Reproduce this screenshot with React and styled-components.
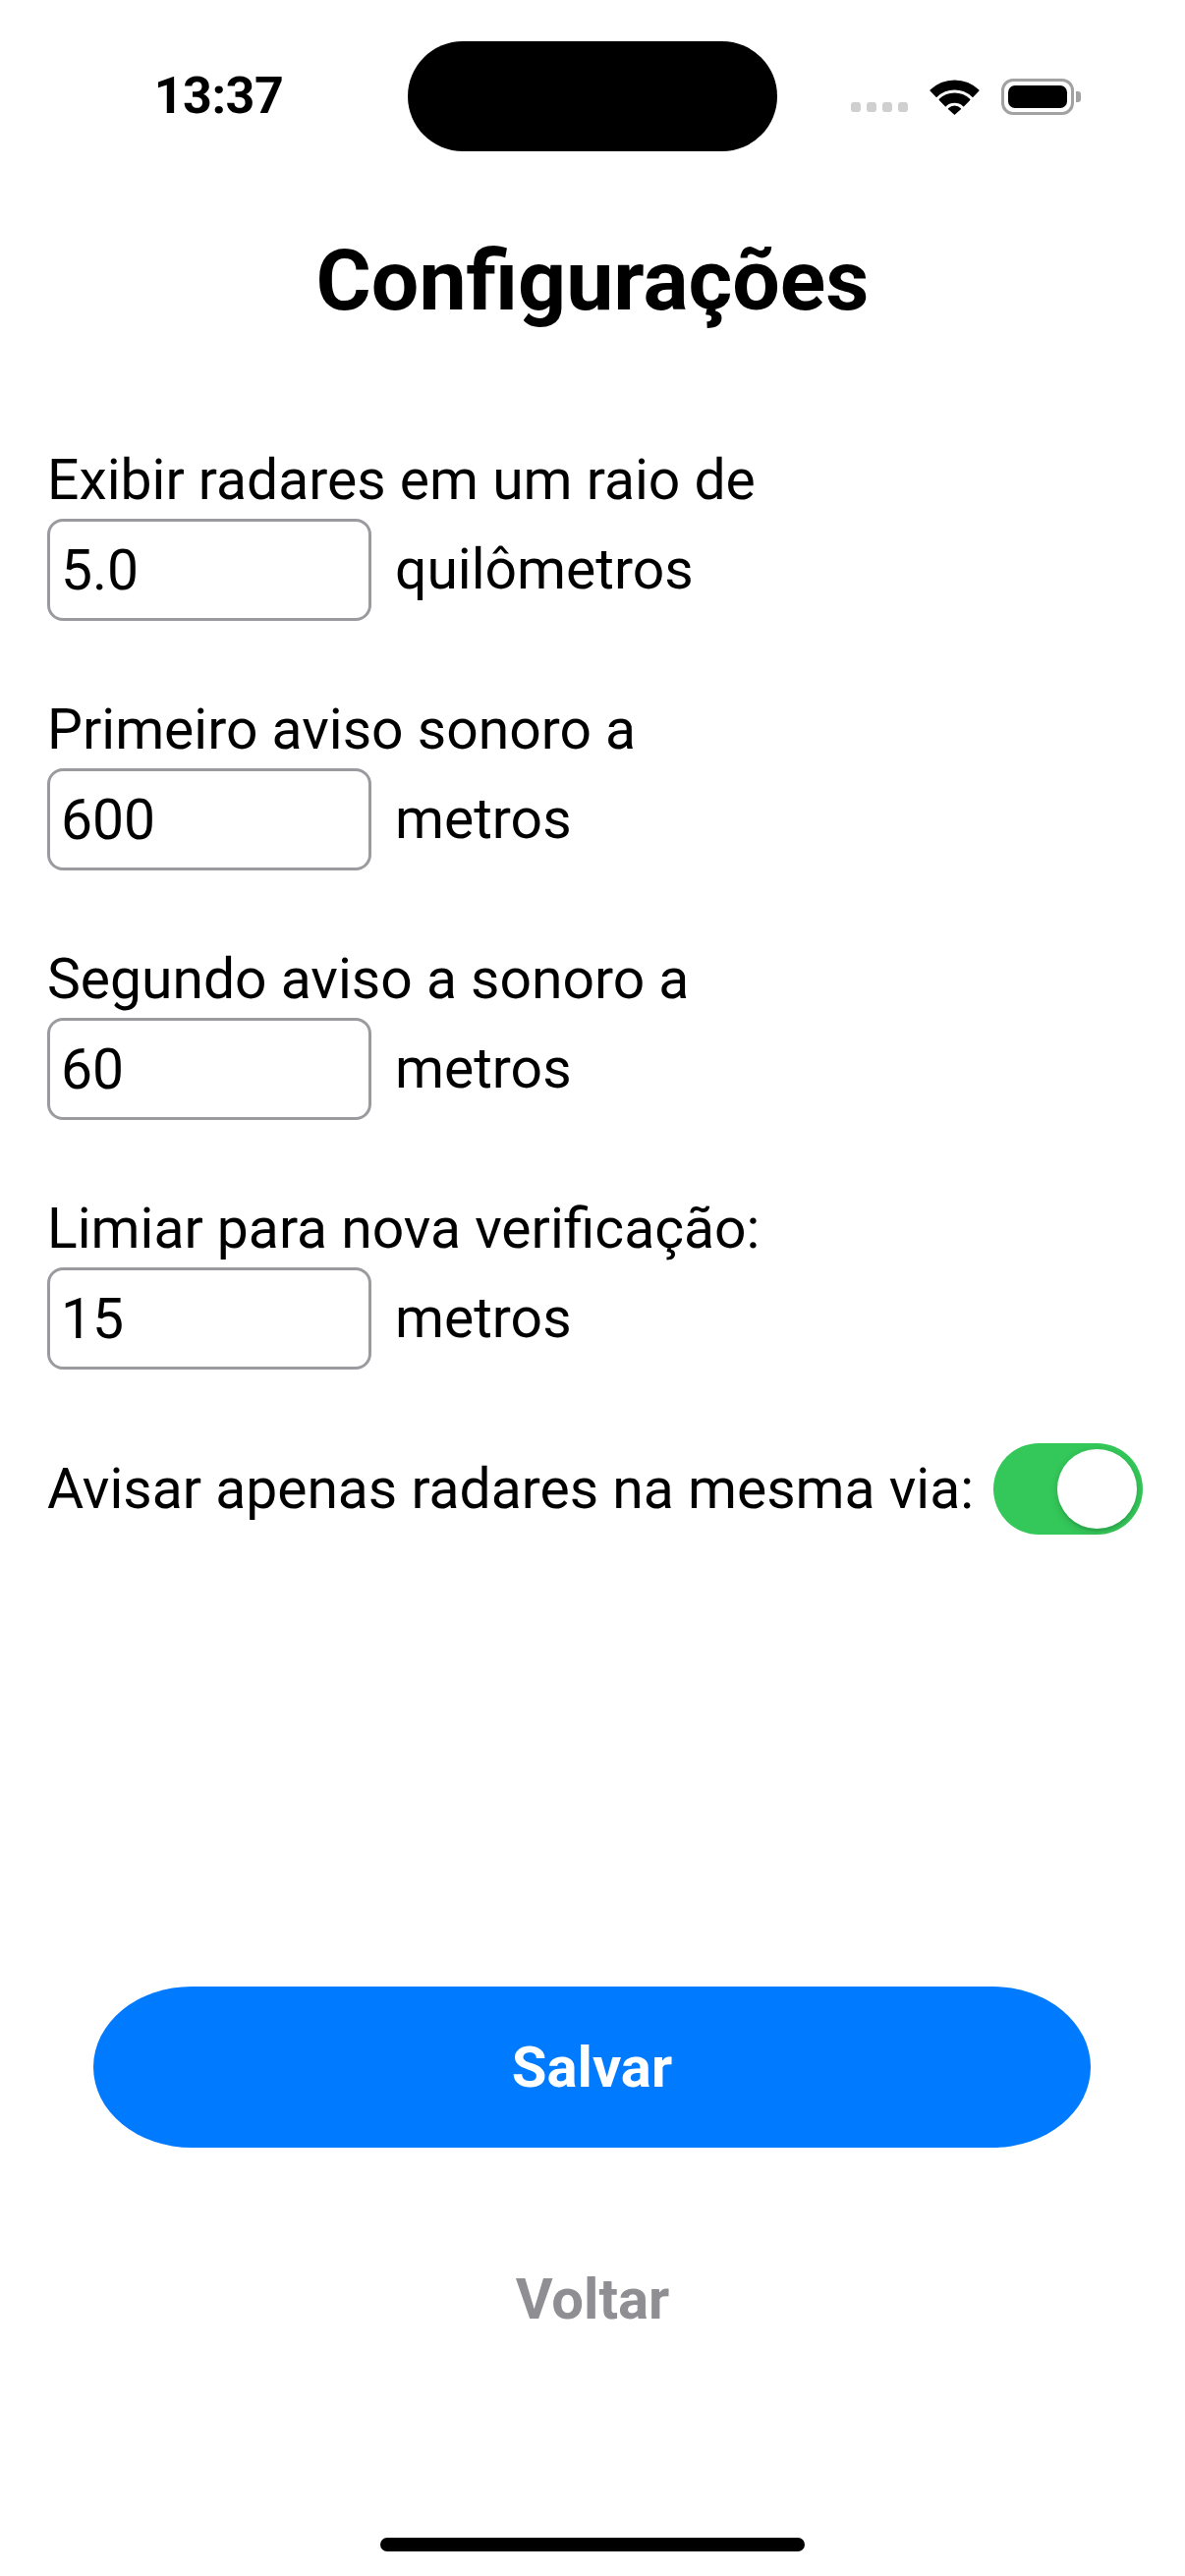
import React from "react";
import styled, { createGlobalStyle } from "styled-components";

const GlobalStyle = createGlobalStyle`
  html, body {
    margin: 0;
    padding: 0;
    background: #ffffff;
  }
  body {
    font-family: Roboto, "Liberation Sans", sans-serif;
    color: #000;
  }
  * {
    box-sizing: border-box;
  }
`;

const fields = [
  { label: "Exibir radares em um raio de", value: "5.0", unit: "quilômetros" },
  { label: "Primeiro aviso sonoro a", value: "600", unit: "metros" },
  { label: "Segundo aviso a sonoro a", value: "60", unit: "metros" },
  { label: "Limiar para nova verificação:", value: "15", unit: "metros" },
];

export default function App() {
  return (
    <>
      <GlobalStyle />
      <Screen>
        <StatusBar>
          <Clock>13:37</Clock>
          <Island />
          <StatusIcons>
            <Signal>
              <Dot />
              <Dot />
              <Dot />
              <Dot />
            </Signal>
            <WifiIcon />
            <Battery>
              <BatteryFill />
            </Battery>
            <BatteryCap />
          </StatusIcons>
        </StatusBar>

        <Title>Configurações</Title>

        <Form>
          {fields.map((f) => (
            <Group key={f.label}>
              <Label>{f.label}</Label>
              <InputRow>
                <NumberInput readOnly value={f.value} />
                <Unit>{f.unit}</Unit>
              </InputRow>
            </Group>
          ))}
          <ToggleRow>
            <Label>Avisar apenas radares na mesma via:</Label>
            <Switch $on>
              <Knob />
            </Switch>
          </ToggleRow>
        </Form>

        <Spacer />

        <Footer>
          <SaveButton>Salvar</SaveButton>
          <BackButton>Voltar</BackButton>
          <HomeIndicator />
        </Footer>
      </Screen>
    </>
  );
}

function WifiIcon() {
  return (
    <svg width="51" height="37" viewBox="0 0 51 37">
      <g fill="#000" stroke="#000" strokeWidth="1.5" strokeLinejoin="round">
        <path d="M1.1 12.1 A35 35 0 0 1 49.9 12.1 L43.9 18.3 A26.5 26.5 0 0 0 7.1 18.3 Z" />
        <path d="M10.3 21.4 A22 22 0 0 1 40.7 21.4 L34.6 27.6 A13.5 13.5 0 0 0 16.4 27.6 Z" />
        <path d="M19.6 30.7 A8.6 8.6 0 0 1 31.4 30.7 L25.5 36 Z" />
      </g>
    </svg>
  );
}

const Screen = styled.div`
  width: 1206px;
  height: 2622px;
  display: flex;
  flex-direction: column;
  overflow: hidden;
  background: #fff;
`;

const StatusBar = styled.div`
  display: grid;
  grid-template-columns: 1fr 376px 1fr;
  align-items: center;
  padding-top: 42px;
`;

const Clock = styled.div`
  justify-self: center;
  padding-left: 30px;
  font-size: 52px;
  font-weight: 700;
  letter-spacing: -0.5px;
  line-height: 60px;
`;

const Island = styled.div`
  height: 112px;
  background: #000;
  border-radius: 56px;
`;

const StatusIcons = styled.div`
  justify-self: center;
  margin-right: 32px;
  display: flex;
  align-items: center;
`;

const Signal = styled.div`
  display: flex;
  gap: 6px;
  margin-top: 22px;
  margin-right: 22px;
`;

const Dot = styled.span`
  width: 10px;
  height: 10px;
  border-radius: 3px;
  background: #cfcfcf;
`;

const Battery = styled.div`
  width: 74px;
  height: 37px;
  margin-left: 22px;
  border: 3px solid #a2a2a2;
  border-radius: 12px;
  padding: 4px;
  display: flex;
`;

const BatteryFill = styled.div`
  flex: 1;
  background: #000;
  border-radius: 7px;
`;

const BatteryCap = styled.div`
  width: 5px;
  height: 11px;
  margin-left: 2px;
  background: #a2a2a2;
  border-radius: 0 3px 3px 0;
`;

const Title = styled.h1`
  margin: 82px 0 0;
  text-align: center;
  font-size: 86px;
  line-height: 100px;
  font-weight: 700;
`;

const Form = styled.div`
  margin-top: 117px;
  padding: 0 43px 0 48px;
  display: flex;
  flex-direction: column;
  gap: 75px;
`;

const Group = styled.div`
  display: flex;
  flex-direction: column;
  gap: 3px;
`;

const Label = styled.div`
  font-size: 57px;
  line-height: 72px;
  font-weight: 400;
  white-space: nowrap;
`;

const InputRow = styled.div`
  display: flex;
  align-items: center;
  gap: 24px;
`;

const NumberInput = styled.input`
  width: 330px;
  height: 104px;
  border: 3px solid #9b9b9f;
  border-radius: 16px;
  padding: 0 0 0 11px;
  font-family: Roboto, "Liberation Sans", sans-serif;
  font-size: 57px;
  color: #000;
  background: #fff;
  outline: none;
`;

const Unit = styled.span`
  font-size: 57px;
  line-height: 72px;
`;

const ToggleRow = styled.div`
  display: flex;
  align-items: center;
  justify-content: space-between;
`;

const Switch = styled.div`
  width: 152px;
  height: 93px;
  border-radius: 47px;
  background: ${(p) => (p.$on ? "#34c759" : "#e9e9ea")};
  display: flex;
  align-items: center;
  justify-content: ${(p) => (p.$on ? "flex-end" : "flex-start")};
  padding: 0 6px;
`;

const Knob = styled.div`
  width: 81px;
  height: 81px;
  border-radius: 50%;
  background: #fff;
  box-shadow: 0 3px 8px rgba(0, 0, 0, 0.15), 0 3px 1px rgba(0, 0, 0, 0.06);
`;

const Spacer = styled.div`
  flex: 1;
`;

const Footer = styled.div`
  display: flex;
  flex-direction: column;
  align-items: center;
  padding-bottom: 25px;
`;

const SaveButton = styled.button`
  align-self: stretch;
  margin: 0 96px 0 95px;
  height: 164px;
  border: none;
  border-radius: 100px / 82px;
  background: #007aff;
  color: #fff;
  font-family: Roboto, "Liberation Sans", sans-serif;
  font-size: 58px;
  font-weight: 700;
`;

const BackButton = styled.button`
  margin-top: 118px;
  border: none;
  background: none;
  padding: 0;
  color: #8e8e93;
  font-family: Roboto, "Liberation Sans", sans-serif;
  font-size: 58px;
  line-height: 72px;
  font-weight: 700;
`;

const HomeIndicator = styled.div`
  margin-top: 207px;
  width: 432px;
  height: 14px;
  border-radius: 7px;
  background: #000;
`;
